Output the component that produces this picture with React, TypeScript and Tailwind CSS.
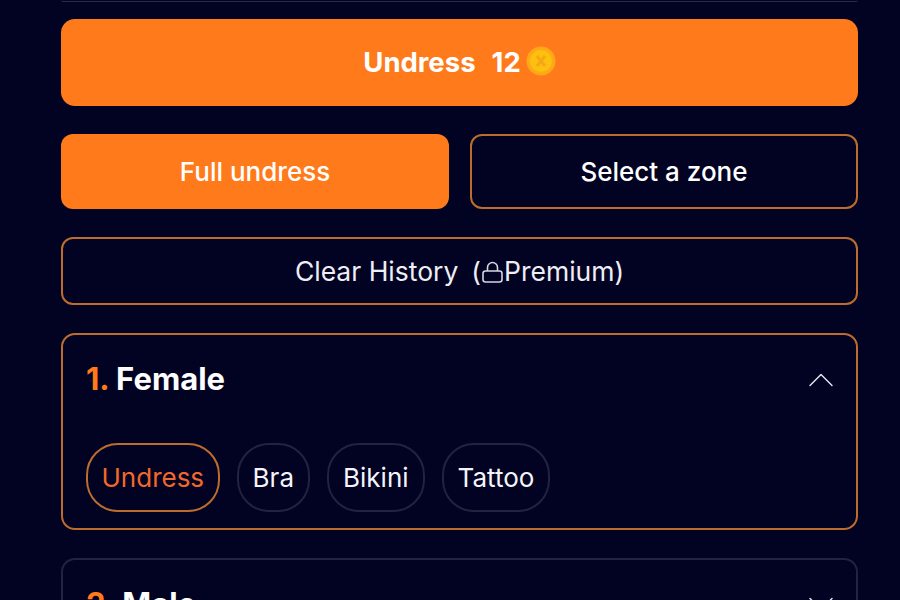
import { ChevronUp, ChevronDown } from "lucide-react";

const tags = ["Bra", "Bikini", "Tattoo"];

function Coin() {
  return (
    <svg width="30" height="30" viewBox="0 0 30 30" className="ml-[5px] -mt-[3px]">
      <circle cx="15" cy="15" r="14.5" fill="#ffa51c" />
      <circle cx="15" cy="15" r="11.5" fill="#fdc00f" stroke="#f8b010" strokeWidth="1.5" />
      <path d="M11 10l8 10M19 10l-8 10" stroke="#f6a814" strokeWidth="3" />
    </svg>
  );
}

function LockIcon() {
  return (
    <svg width="21" height="24" viewBox="0 0 21 24" fill="none" stroke="#d5d6e2" strokeWidth="1.6" className="mx-[1px]">
      <rect x="1" y="11" width="19" height="11" rx="2.5" />
      <path d="M5.5 11V7.5a5 5 0 0 1 10 0V11" />
    </svg>
  );
}

export default function App() {
  return (
    <div className="h-[600px] overflow-hidden bg-[#020222] pl-[61px] pr-[42px] font-['Inter','Liberation_Sans',sans-serif] text-white">
      <div className="h-[2px] rounded-b border-b border-[#2a2a48]" />

      <button className="mt-[17px] flex h-[87px] w-full items-center justify-center rounded-[14px] bg-[#ff7a1a] text-[27.5px] font-bold">
        <span>Undress</span>
        <span className="ml-[16px]">12</span>
        <Coin />
      </button>

      <div className="mt-[28px] grid grid-cols-2 gap-[21px]">
        <button className="h-[75px] rounded-[12px] bg-[#ff7a1a] text-[26px] font-medium">Full undress</button>
        <button className="h-[75px] rounded-[12px] border-2 border-[#bd6c2e] text-[26px] font-medium">Select a zone</button>
      </div>

      <button className="mt-[28px] flex h-[68px] w-full items-center justify-center rounded-[12px] border-2 border-[#bd6c2e] pt-[1px] text-[26.5px] text-[#eeeef5]">
        <span>Clear History</span>
        <span className="ml-[13px]">(</span>
        <LockIcon />
        <span>Premium)</span>
      </button>

      <section className="mt-[28px] h-[197px] rounded-[14px] border-2 border-[#bd6c2e] px-[23px]">
        <div className="flex h-[88px] items-center justify-between">
          <h2 className="text-[31px] font-bold">
            <span className="text-[#ff7a1a]">1.</span> Female
          </h2>
          <ChevronUp size={44} strokeWidth={0.8} className="mr-[-10px] mt-[2px] text-[#e3e3f0]" />
        </div>
        <div className="mt-[20px] flex gap-[17px]">
          <span className="flex h-[69px] items-center rounded-[32px] border-2 border-[#bd6c2e] px-[13.5px] text-[26px] text-[#f2682a]">Undress</span>
          {tags.map((tag) => (
            <span key={tag} className="flex h-[69px] items-center rounded-[32px] border-2 border-[#23233f] px-[14px] text-[26px] text-[#f4f4fa]">
              {tag}
            </span>
          ))}
        </div>
      </section>

      <section className="mt-[28px] h-[197px] rounded-[14px] border-2 border-[#23233f] px-[23px]">
        <div className="flex h-[88px] items-center justify-between">
          <h2 className="text-[31px] font-bold">
            <span className="text-[#ff7a1a]">2.</span> Male
          </h2>
          <ChevronDown size={44} strokeWidth={0.8} className="mr-[-10px] text-[#e3e3f0]" />
        </div>
      </section>
    </div>
  );
}
